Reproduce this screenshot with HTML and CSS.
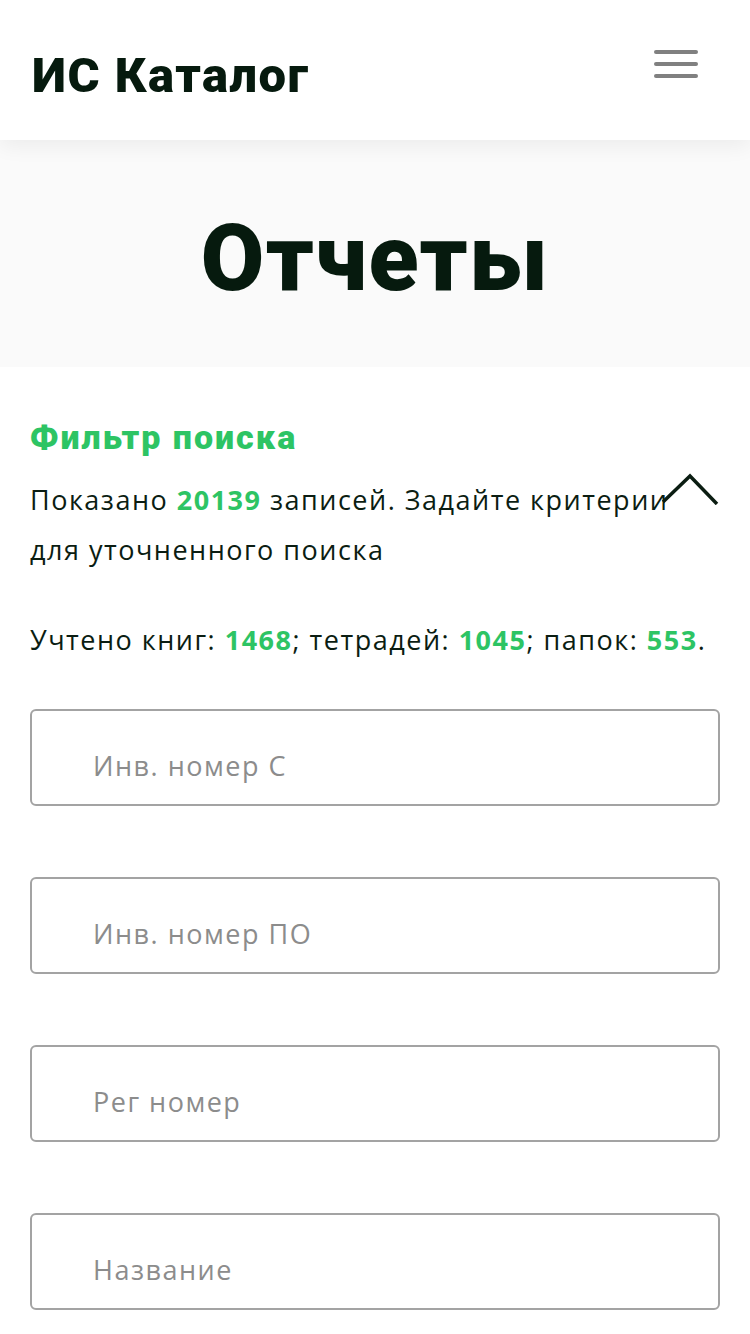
FILE: index.html
```html
<!DOCTYPE html>
<html lang="ru">
<head>
  <meta charset="UTF-8">
  <meta name="viewport" content="width=device-width, initial-scale=1.0">
  <title>ИС Каталог — Отчеты</title>
  <link rel="stylesheet" href="styles.css">
</head>
<body>
  <header class="header">
    <div class="logo">ИС Каталог</div>
    <button class="burger" aria-label="Меню">
      <span></span><span></span><span></span>
    </button>
  </header>

  <section class="hero">
    <h1>Отчеты</h1>
  </section>

  <main class="filter">
    <h2 class="filter-title">Фильтр поиска</h2>
    <div class="filter-info">
      <p>Показано <b>20139</b> записей. Задайте критерии для уточненного поиска</p>
      <svg class="toggle" width="60" height="34" viewBox="0 0 60 34">
        <polyline points="3,31 30,5 57,33" fill="none" stroke="#0b1d12" stroke-width="3.5"/>
      </svg>
    </div>
    <p class="counts">Учтено книг: <b>1468</b>; тетрадей: <b>1045</b>; папок: <b>553</b>.</p>

    <div class="fields">
      <input type="text" placeholder="Инв. номер С">
      <input type="text" placeholder="Инв. номер ПО">
      <input type="text" placeholder="Рег номер">
      <input type="text" placeholder="Название">
    </div>
  </main>
</body>
</html>
```

FILE: styles.css
```css
body {
  margin: 0;
  font-family: "Open Sans", sans-serif;
  color: #0b1d12;
  background-color: #fff;
}

.header {
  height: 140px;
  display: flex;
  align-items: center;
  justify-content: space-between;
  padding: 0 52px 0 32px;
  background-color: #fff;
  box-shadow: 0 6px 20px rgba(0, 0, 0, 0.06);
  position: relative;
  z-index: 1;
}

.logo {
  font-family: Roboto, sans-serif;
  font-weight: 900;
  font-size: 49px;
  letter-spacing: 1.5px;
  color: #061a0e;
  margin-top: 10px;
}

.burger {
  background: none;
  border: none;
  padding: 0;
  width: 44px;
  display: flex;
  flex-direction: column;
  gap: 8px;
  margin-top: -12px;
}

.burger span {
  display: block;
  height: 4px;
  border-radius: 2px;
  background-color: #808080;
}

.hero {
  height: 227px;
  background-color: #fafafa;
  display: flex;
  align-items: center;
  justify-content: center;
}

.hero h1 {
  margin: 10px 0 0;
  font-family: Roboto, sans-serif;
  font-weight: 900;
  font-size: 92px;
  color: #061a0e;
  letter-spacing: 1.5px;
}

.filter {
  padding: 50px 30px 40px;
}

.filter-title {
  margin: 0;
  font-family: Roboto, sans-serif;
  font-weight: 900;
  font-size: 34px;
  letter-spacing: 2px;
  line-height: 40px;
  color: #2dc464;
}

.filter-info {
  position: relative;
  margin-top: 18px;
}

.filter-info p,
.counts {
  margin: 0;
  font-size: 27px;
  letter-spacing: 1.5px;
  line-height: 50px;
}

b {
  font-weight: 700;
  color: #2dc464;
}

.toggle {
  position: absolute;
  right: 0;
  top: -4px;
}

.counts {
  margin-top: 40px;
}

.fields {
  margin-top: 44px;
  display: flex;
  flex-direction: column;
  gap: 71px;
}

.fields input {
  height: 97px;
  box-sizing: border-box;
  border: 2px solid #a3a3a3;
  border-radius: 6px;
  padding: 16px 61px 0;
  font-family: "Open Sans", sans-serif;
  font-size: 27px;
  letter-spacing: 1.5px;
  color: #0b1d12;
  background-color: #fff;
}

.fields input::placeholder {
  color: #8c8c8c;
}
```
